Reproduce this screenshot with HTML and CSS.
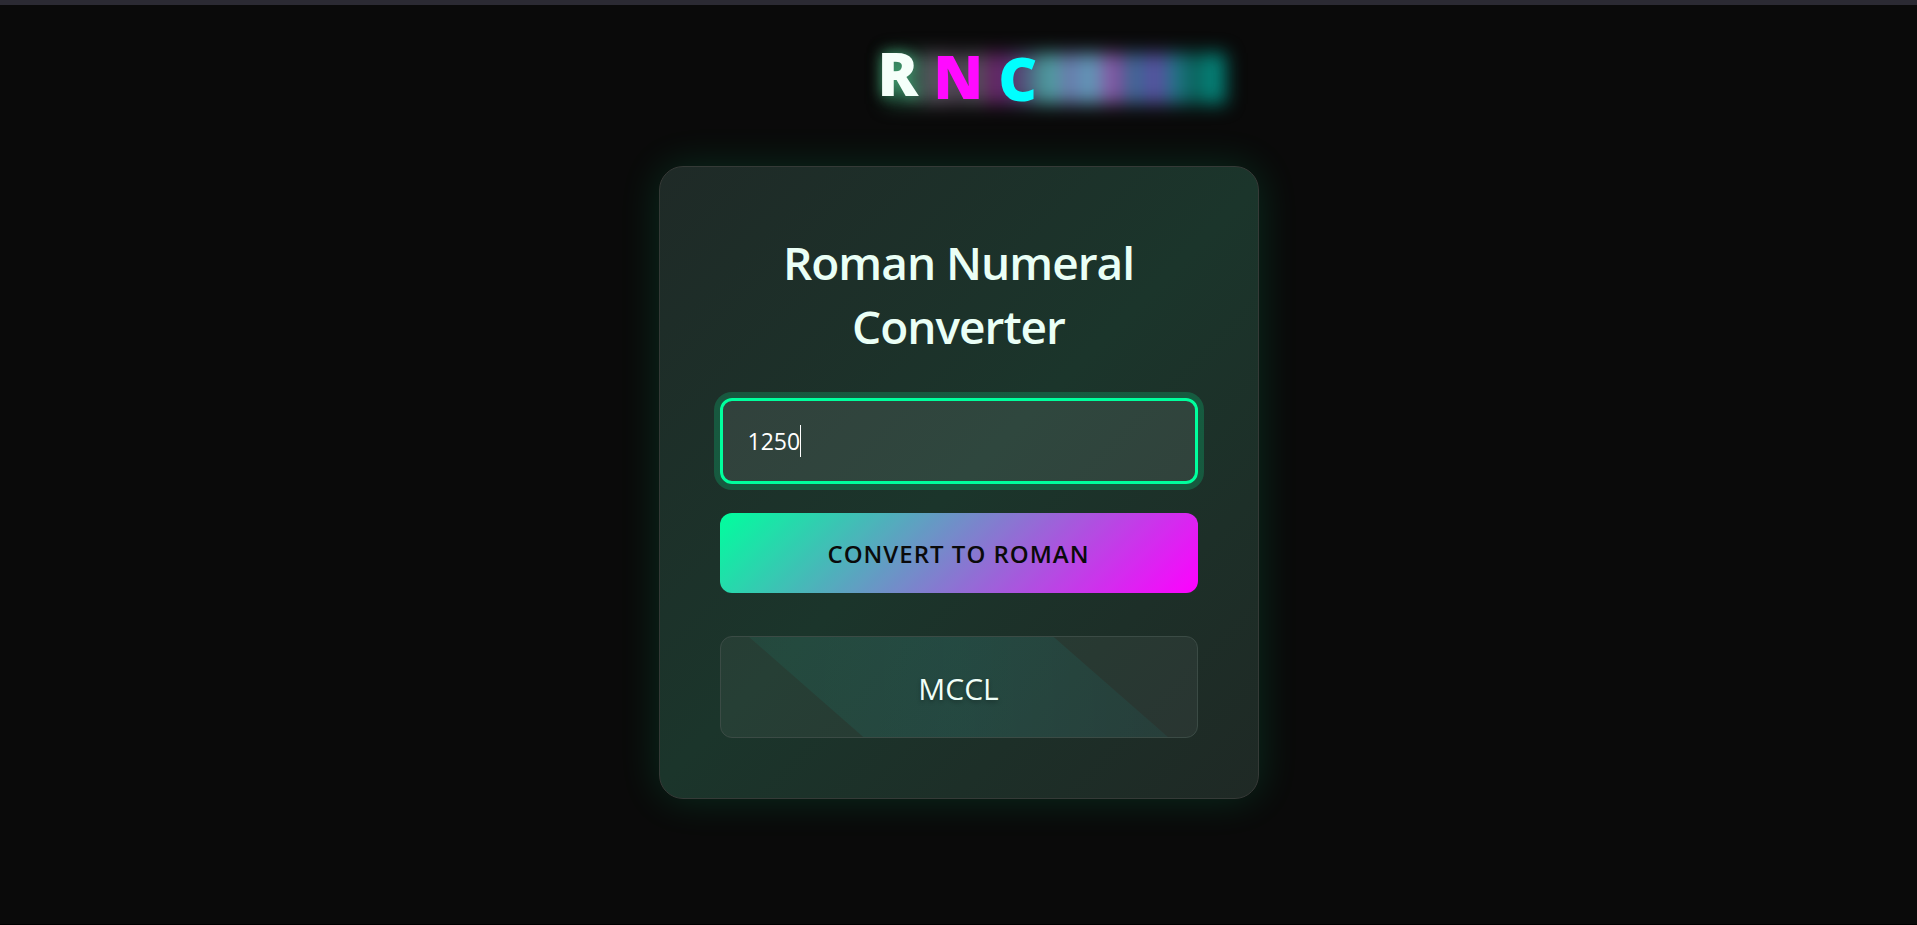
FILE: index.html
```html
<!DOCTYPE html>
<html lang="en">
<head>
<meta charset="utf-8">
<meta name="viewport" content="width=device-width, initial-scale=1">
<title>Roman Numeral Converter</title>
<link rel="stylesheet" href="styles.css">
</head>
<body>
<header class="site-header">
  <div class="logo" aria-label="RNC">
    <span class="logo-trail" aria-hidden="true"></span>
    <span class="letter letter-r">R</span>
    <span class="letter letter-n">N</span>
    <span class="letter letter-c">C</span>
  </div>
</header>
<main class="card">
  <h1 class="title">Roman Numeral Converter</h1>
  <form class="form">
    <div class="field">
      <input class="number-input" type="text" inputmode="numeric" value="1250" aria-label="Number">
      <span class="caret" aria-hidden="true"></span>
    </div>
    <button class="convert" type="button">Convert to Roman</button>
  </form>
  <output class="result"><span class="result-text">MCCL</span></output>
</main>
</body>
</html>
```
FILE: styles.css
```css
* { box-sizing: border-box; }

body {
  margin: 0;
  min-height: 100vh;
  border-top: 5px solid #2b2a33;
  border-bottom: 1px solid #000;
  background: #0a0a0a;
  color: #f0fff8;
  font-family: "Segoe UI", "Open Sans", "Noto Sans", sans-serif;
}

.site-header {
  display: flex;
  justify-content: center;
  padding: 38px 24px 58px;
}

.logo {
  position: relative;
  display: flex;
  gap: 15px;
  width: 352px;
  height: 65px;
  margin-left: 190px;
  font-family: "Segoe UI Black", "Noto Sans", sans-serif;
  font-size: 60px;
  font-weight: 900;
  line-height: 60px;
}

.logo-trail {
  position: absolute;
  inset: 10px 4px 4px 8px;
  background: linear-gradient(90deg,
    #1c4c38 0%, #2c5644 8%, #5c5460 14%, #4c4050 22%, #4f5a58 27%,
    #6a1c64 31%, #5a2a68 35%, #4f6080 42%, #48a8a0 48%, #7070ac 54%, #58a4b8 60%,
    #9048a0 67%, #2f7090 73%, #6448a4 79%, #1a7a84 86%, #0a5a52 91%, #048a80 96%, #047a70 100%);
  filter: blur(9px);
}

.letter { position: relative; }
.letter-r { align-self: flex-start; color: #f5fffa; text-shadow: 0 0 14px rgba(80, 200, 140, 0.7); }
.letter-n { align-self: center; color: #ff0aff; }
.letter-c { align-self: flex-end; color: #00ffff; }

.card {
  width: 600px;
  max-width: calc(100% - 32px);
  margin: 0 auto;
  padding: 60px;
  border: 1px solid #353a37;
  border-radius: 24px;
  background: linear-gradient(135deg, #1f2a27 0%, #1b352b 50%, #1f2925 100%);
  box-shadow: 0 0 40px rgba(0, 255, 157, 0.14);
}

.title {
  margin: 0;
  padding: 3px 0 40px;
  font-size: 46px;
  font-weight: 600;
  line-height: 64px;
  letter-spacing: -1px;
  text-align: center;
  color: #eafff6;
}

.form {
  display: grid;
  gap: 29px;
}

.field {
  position: relative;
  display: grid;
}

.number-input {
  width: 100%;
  height: 86px;
  padding: 0 25px;
  border: 3px solid #00ff9d;
  border-radius: 12px;
  outline: 0;
  background: rgba(255, 255, 255, 0.09);
  box-shadow: 0 0 0 6px rgba(0, 255, 157, 0.2);
  color: #fff;
  caret-color: transparent;
  font: 400 23px/32px "Segoe UI", "Open Sans", "Noto Sans", sans-serif;
}

.caret {
  position: absolute;
  top: 27px;
  left: 80px;
  width: 1px;
  height: 32px;
  background: #fff;
}

.convert {
  height: 80px;
  padding: 2px 0 0;
  border: 0;
  border-radius: 12px;
  background: linear-gradient(135deg, #00ff9d, #ff00ff);
  color: #0a0a0a;
  font: 600 24px/32px "Segoe UI", "Open Sans", "Noto Sans", sans-serif;
  letter-spacing: 1px;
  text-transform: uppercase;
}

.result {
  position: relative;
  display: flex;
  align-items: center;
  justify-content: center;
  margin-top: 43px;
  padding: 31px 29px 27px;
  overflow: hidden;
  border: 1px solid #3b4b45;
  border-radius: 12px;
  background: rgba(255, 255, 255, 0.05);
  font-size: 30px;
  line-height: 42px;
}

.result::before {
  content: "";
  position: absolute;
  inset: 0;
  background: linear-gradient(90deg, rgba(0, 255, 200, 0.05), rgba(0, 255, 255, 0.07) 50%, rgba(0, 255, 255, 0.04));
  clip-path: polygon(6% 0, 70% 0, 94% 100%, 30% 100%);
}

.result-text {
  position: relative;
  text-shadow: 0 2px 4px rgba(0, 0, 0, 0.3);
}
```
